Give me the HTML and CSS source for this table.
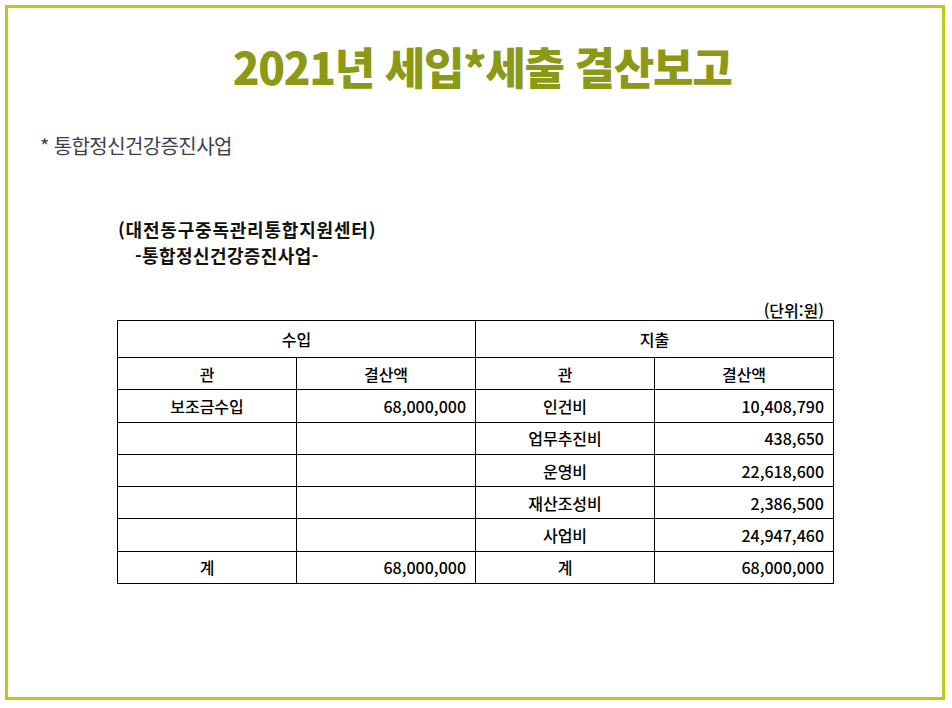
FILE: index.html
```html
<!DOCTYPE html>
<html lang="ko">
<head>
<meta charset="utf-8">
<title>2021년 세입*세출 결산보고</title>
<link rel="stylesheet" href="styles.css">
</head>
<body>
<div class="frame">
  <h1 class="title">2021년 세입*세출 결산보고</h1>
  <p class="subtitle">* 통합정신건강증진사업</p>
  <div class="org">
    <div class="org-name">(대전동구중독관리통합지원센터)</div>
    <div class="org-program">-통합정신건강증진사업-</div>
  </div>
  <div class="report">
    <div class="unit">(단위:원)</div>
    <table class="ledger">
      <tr class="row-head">
        <th colspan="2">수입</th>
        <th colspan="2">지출</th>
      </tr>
      <tr>
        <th>관</th>
        <th>결산액</th>
        <th>관</th>
        <th>결산액</th>
      </tr>
      <tr>
        <td class="name">보조금수입</td>
        <td class="num">68,000,000</td>
        <td class="name">인건비</td>
        <td class="num">10,408,790</td>
      </tr>
      <tr>
        <td></td>
        <td></td>
        <td class="name">업무추진비</td>
        <td class="num">438,650</td>
      </tr>
      <tr>
        <td></td>
        <td></td>
        <td class="name">운영비</td>
        <td class="num">22,618,600</td>
      </tr>
      <tr>
        <td></td>
        <td></td>
        <td class="name">재산조성비</td>
        <td class="num">2,386,500</td>
      </tr>
      <tr>
        <td></td>
        <td></td>
        <td class="name">사업비</td>
        <td class="num">24,947,460</td>
      </tr>
      <tr>
        <td class="name">계</td>
        <td class="num">68,000,000</td>
        <td class="name">계</td>
        <td class="num">68,000,000</td>
      </tr>
    </table>
  </div>
</div>
</body>
</html>
```

FILE: styles.css
```css
* {
  box-sizing: border-box;
}

html, body {
  margin: 0;
  padding: 0;
  background: #ffffff;
}

body {
  font-family: "Noto Sans CJK KR", "Noto Sans", sans-serif;
  color: #000;
}

.frame {
  margin: 5px 0 0 5px;
  width: 940px;
  height: 695px;
  border: 3px solid #b9cb18;
  padding: 0;
}

.title {
  margin: 28px 0 0 0;
  padding-left: 14px;
  text-align: center;
  font-size: 44px;
  line-height: 60px;
  font-weight: 900;
  letter-spacing: -1.3px;
  color: #8b9914;
}

.subtitle {
  margin: 38px 0 0 32px;
  font-size: 20px;
  line-height: 24px;
  letter-spacing: -0.6px;
  color: #3e3e4c;
}

.org {
  margin: 58px 0 0 110px;
  font-size: 18px;
  line-height: 26px;
  font-weight: 700;
  letter-spacing: 0.8px;
  color: #111;
}

.org-program {
  padding-left: 17px;
  letter-spacing: 0.4px;
}

.report {
  margin: 32px 0 0 109px;
  width: 717px;
}

.unit {
  text-align: right;
  padding-right: 10px;
  font-size: 16px;
  line-height: 20px;
  font-weight: 500;
}

.ledger {
  border-collapse: collapse;
  width: 717px;
  table-layout: fixed;
  font-size: 16px;
  font-weight: 500;
}

.ledger th,
.ledger td {
  border: 1px solid #000;
  height: 32.3px;
  padding: 0 9px;
  line-height: 20px;
  font-weight: 500;
  text-align: center;
  white-space: nowrap;
}

.ledger .row-head th {
  height: 37px;
}

.ledger td.num {
  text-align: right;
}
```
